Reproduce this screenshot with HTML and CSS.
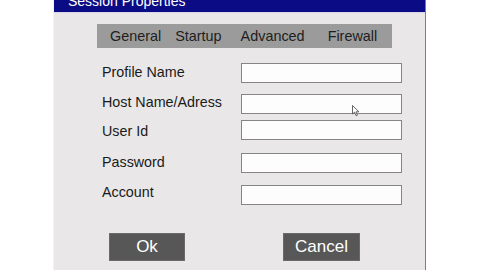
FILE: index.html
```html
<!DOCTYPE html>
<html>
<head>
<meta charset="utf-8">
<link rel="stylesheet" href="styles.css">
</head>
<body>
<div class="dialog">
  <div class="titlebar"><span class="title">Session Properties</span></div>
  <div class="tabs">
    <span class="tab t1">General</span>
    <span class="tab t2">Startup</span>
    <span class="tab t3">Advanced</span>
    <span class="tab t4">Firewall</span>
  </div>
  <div class="form">
    <div class="row r1"><span class="label">Profile Name</span><span class="field"></span></div>
    <div class="row r2"><span class="label">Host Name/Adress</span><span class="field"></span></div>
    <div class="row r3"><span class="label">User Id</span><span class="field"></span></div>
    <div class="row r4"><span class="label">Password</span><span class="field"></span></div>
    <div class="row r5"><span class="label">Account</span><span class="field"></span></div>
  </div>
  <div class="buttons">
    <span class="btn ok">Ok</span>
    <span class="btn cancel">Cancel</span>
  </div>
  <svg class="cursor" width="8" height="12" viewBox="0 0 8 12"><path d="M0.5 0.5 L0.5 9 L2.6 7.2 L4.2 10.8 L5.5 10.2 L4 6.8 L7 6.8 Z" fill="#fff" stroke="#555" stroke-width="0.9"/></svg>
</div>
</body>
</html>
```
FILE: styles.css
```css
html, body { margin: 0; padding: 0; background: #fff; }
body { width: 480px; height: 270px; overflow: hidden; font-family: "Liberation Sans", Arial, sans-serif; }
.dialog {
  position: relative;
  margin-left: 53px;
  width: 371px;
  height: 270px;
  background: #e9e7e7;
  border-right: 1px solid #7d7d7d;
  border-left: 1px solid #f2f2f2;
  box-sizing: content-box;
}
.titlebar {
  height: 13px;
  background: #0b0b86;
  overflow: hidden;
  border-bottom: 1px solid #d8d8e8;
  box-sizing: border-box;
}
.title {
  display: block;
  color: #fff;
  font-size: 14px;
  line-height: 14px;
  margin-top: -6px;
  padding-left: 14px;
}
.tabs {
  margin: 11px 0 0 43px;
  width: 295px;
  height: 24px;
  background: #9b9b9b;
  display: flex;
  align-items: center;
  font-size: 14.4px;
  color: #1e1e1e;
}
.t1 { margin-left: 13px; }
.t2 { margin-left: 14px; }
.t3 { margin-left: 19px; }
.t4 { margin-left: 23px; }
.form { margin-top: 15px; }
.row { display: flex; align-items: center; height: 20px; }
.r2 { margin-top: 11px; }
.r3 { margin-top: 6px; }
.r4 { margin-top: 13px; }
.r5 { margin-top: 12px; }
.label {
  width: 139px;
  padding-left: 48px;
  font-size: 14.3px;
  color: #1a1a1a;
}
.r1 .label { margin-top: -2px; }
.r2 .label { margin-top: -4px; }
.r3 .label { margin-top: 1px; }
.r4 .label { margin-top: -3px; }
.r5 .label { margin-top: -7px; }
.field {
  width: 161px;
  height: 20px;
  box-sizing: border-box;
  background: #fdfdfd;
  border: 1px solid #858585;
}
.buttons { display: flex; margin-top: 28px; padding-left: 55px; }
.btn {
  height: 28px;
  background: #575757;
  color: #fff;
  font-size: 17px;
  display: flex;
  align-items: center;
  justify-content: center;
  box-sizing: border-box;
  border: 1px solid #6a6a6a;
}
.ok { width: 76px; }
.cancel { width: 77px; margin-left: 98px; }
.cursor { position: absolute; left: 298px; top: 105px; }
```
